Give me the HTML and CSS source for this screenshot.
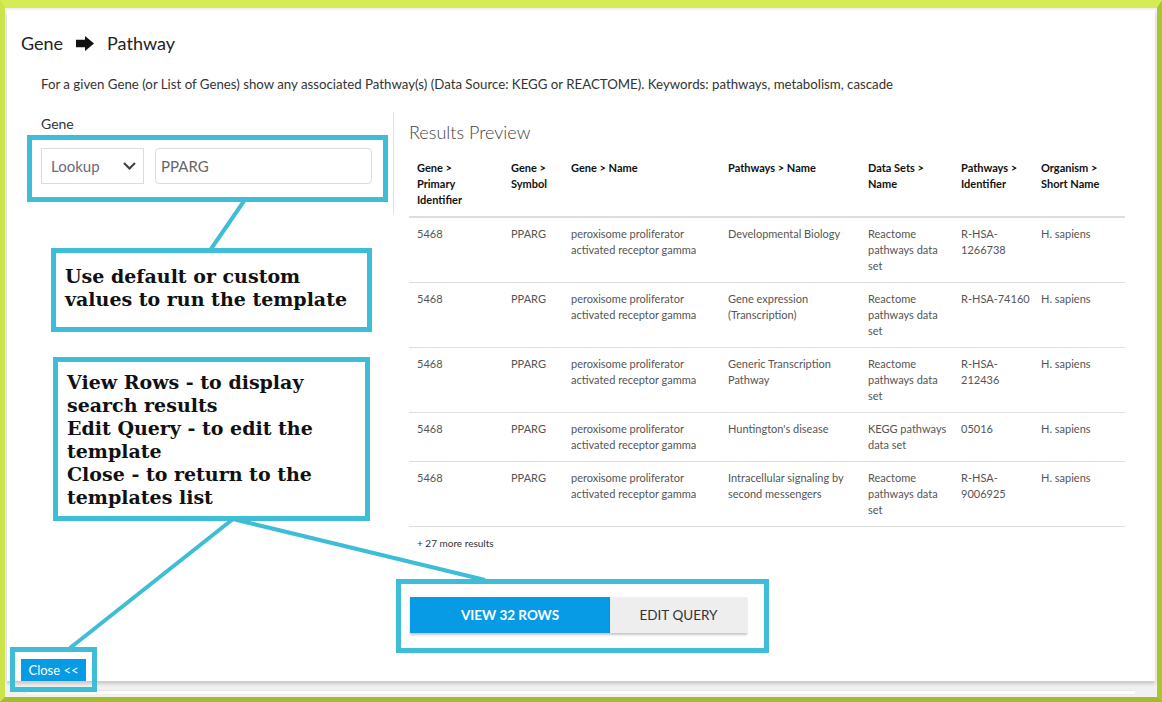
FILE: index.html
```html
<!DOCTYPE html>
<html lang="en">
<head>
<meta charset="utf-8">
<title>Gene → Pathway</title>
<link rel="stylesheet" href="styles.css">
</head>
<body>
<div class="frame">
  <div class="card">
    <h1 class="title">
      <span>Gene</span>
      <svg class="arrow" width="18" height="15" viewBox="0 0 18 15"><path d="M0 3.8H9V0L18 7.5L9 15V11.2H0Z" fill="#111"/></svg>
      <span>Pathway</span>
    </h1>
    <p class="desc">For a given Gene (or List of Genes) show any associated Pathway(s) (Data Source: KEGG or REACTOME). Keywords: pathways, metabolism, cascade</p>
    <div class="body">
      <div class="left">
        <div class="label">Gene</div>
        <div class="constraint">
          <div class="select">
            <span>Lookup</span>
            <svg width="13" height="8" viewBox="0 0 13 8"><path d="M1 1L6.5 6.5L12 1" fill="none" stroke="#444" stroke-width="2.2"/></svg>
          </div>
          <div class="input">PPARG</div>
        </div>
      </div>
      <div class="right">
        <h2 class="results-title">Results Preview</h2>
        <table class="results">
          <colgroup>
            <col style="width:94px"><col style="width:60px"><col style="width:157px"><col style="width:140px"><col style="width:93px"><col style="width:80px"><col style="width:92px">
          </colgroup>
          <thead>
            <tr>
              <th>Gene &gt;<br>Primary<br>Identifier</th>
              <th>Gene &gt;<br>Symbol</th>
              <th>Gene &gt; Name</th>
              <th>Pathways &gt; Name</th>
              <th>Data Sets &gt;<br>Name</th>
              <th>Pathways &gt;<br>Identifier</th>
              <th>Organism &gt;<br>Short Name</th>
            </tr>
          </thead>
          <tbody>
            <tr>
              <td>5468</td><td>PPARG</td><td>peroxisome proliferator<br>activated receptor gamma</td><td>Developmental Biology</td><td>Reactome<br>pathways data<br>set</td><td>R-HSA-<br>1266738</td><td>H. sapiens</td>
            </tr>
            <tr>
              <td>5468</td><td>PPARG</td><td>peroxisome proliferator<br>activated receptor gamma</td><td>Gene expression<br>(Transcription)</td><td>Reactome<br>pathways data<br>set</td><td>R-HSA-74160</td><td>H. sapiens</td>
            </tr>
            <tr>
              <td>5468</td><td>PPARG</td><td>peroxisome proliferator<br>activated receptor gamma</td><td>Generic Transcription<br>Pathway</td><td>Reactome<br>pathways data<br>set</td><td>R-HSA-<br>212436</td><td>H. sapiens</td>
            </tr>
            <tr>
              <td>5468</td><td>PPARG</td><td>peroxisome proliferator<br>activated receptor gamma</td><td>Huntington's disease</td><td>KEGG pathways<br>data set</td><td>05016</td><td>H. sapiens</td>
            </tr>
            <tr>
              <td>5468</td><td>PPARG</td><td>peroxisome proliferator<br>activated receptor gamma</td><td>Intracellular signaling by<br>second messengers</td><td>Reactome<br>pathways data<br>set</td><td>R-HSA-<br>9006925</td><td>H. sapiens</td>
            </tr>
          </tbody>
        </table>
        <div class="more">+ 27 more results</div>
        <div class="actions">
          <button class="btn btn-primary">VIEW 32 ROWS</button>
          <button class="btn btn-secondary">EDIT QUERY</button>
        </div>
      </div>
    </div>
    <button class="close">Close &lt;&lt;</button>
  </div>
  <div class="footer-bar"></div>
</div>

<svg class="callout-lines" width="1162" height="702" viewBox="0 0 1162 702">
  <g stroke="#3dbdd6" stroke-width="4" fill="none">
    <line x1="244" y1="201" x2="211" y2="249"/>
    <line x1="233" y1="519" x2="70" y2="648"/>
    <line x1="233" y1="519" x2="485" y2="580"/>
  </g>
</svg>
<div class="outline outline-inputs"></div>
<div class="outline outline-buttons"></div>
<div class="outline outline-close"></div>
<div class="note note-values">Use default or custom<br>values to run the template</div>
<div class="note note-buttons">View Rows - to display<br>search results<br>Edit Query - to edit the<br>template<br>Close - to return to the<br>templates list</div>
</body>
</html>
```
FILE: styles.css
```css
* { box-sizing: border-box; }
html, body { margin: 0; padding: 0; }
body {
  position: relative;
  width: 1162px;
  height: 702px;
  overflow: hidden;
  font-family: Lato, "Open Sans", sans-serif;
  background: #a4bb2a;
}
.frame {
  width: 1162px;
  height: 702px;
  border-style: solid;
  border-width: 8px 5px 5px 5px;
  border-color: #d6ec55 #a9c530 #a4bb2a #cde34b;
  background: #f1f1f1;
  padding: 2px 2px 0 2px;
}
.card {
  display: flex;
  flex-direction: column;
  height: 671px;
  background: #fff;
  padding: 21px 30px 0 14px;
  box-shadow: 0 3px 3px rgba(0, 0, 0, 0.16);
}
.title {
  display: flex;
  align-items: center;
  gap: 13px;
  margin: 0;
  font-size: 18px;
  line-height: 24px;
  font-weight: 400;
  color: #222;
}
.arrow { margin-top: 1px; }
.desc {
  margin: 20px 0 0 20px;
  font-size: 13.25px;
  line-height: 18px;
  color: #333;
}
.body {
  display: flex;
  align-items: flex-start;
  margin-top: 19px;
}
.left {
  width: 353px;
  margin-left: 20px;
  padding: 2px 0 30px 0;
  border-right: 1px solid #e3e3e3;
}
.label {
  font-size: 14px;
  line-height: 20px;
  color: #333;
}
.constraint {
  display: flex;
  gap: 11px;
  margin-top: 14px;
}
.select {
  display: flex;
  align-items: center;
  justify-content: space-between;
  width: 103px;
  height: 36px;
  border: 1px solid #dcdcdc;
  padding: 0 7px 0 9px;
  font-size: 15px;
  color: #6c6a7e;
}
.input {
  display: flex;
  align-items: center;
  width: 217px;
  height: 36px;
  border: 1px solid #dcdcdc;
  border-radius: 4px;
  padding: 0 5px;
  font-size: 15px;
  color: #666;
}
.right {
  flex: 1;
  padding-left: 15px;
}
.results-title {
  margin: 8px 0 0;
  font-size: 18px;
  line-height: 24px;
  font-weight: 300;
  color: #444;
}
.results {
  margin-top: 8px;
  width: 716px;
  table-layout: fixed;
  border-collapse: collapse;
}
.results th, .results td {
  text-align: left;
  vertical-align: top;
  padding: 8px;
  font-size: 11px;
  line-height: 16px;
  white-space: nowrap;
}
.results th {
  font-weight: 700;
  color: #111;
  border-bottom: 2px solid #dddddd;
}
.results td {
  color: #555;
  border-bottom: 1px solid #dddddd;
}
.more {
  margin-top: 9px;
  padding-left: 8px;
  font-size: 10px;
  line-height: 14px;
  color: #333;
}
.actions {
  display: flex;
  margin: 47px 0 0 1px;
}
.btn {
  height: 36px;
  border: none;
  padding: 0;
  font-family: Lato, "Open Sans", sans-serif;
  font-size: 13.5px;
  box-shadow: 0 2px 2px rgba(0, 0, 0, 0.22);
}
.btn-primary {
  width: 200px;
  background: #089be5;
  color: #fff;
  font-weight: 700;
}
.btn-secondary {
  width: 137px;
  background: #eeeeee;
  color: #333;
  font-weight: 400;
}
.close {
  margin-top: auto;
  align-self: flex-start;
  width: 65px;
  height: 22px;
  border: none;
  padding: 0;
  background: #089be5;
  color: #fff;
  font-family: Lato, "Open Sans", sans-serif;
  font-size: 13px;
}
.footer-bar {
  margin: 9px 20px 0 20px;
  height: 4px;
  background: #fff;
  border-top: 1px solid #e6e6e6;
}
.callout-lines {
  position: absolute;
  left: 0;
  top: 0;
  pointer-events: none;
}
.outline, .note {
  position: absolute;
  border: 5px solid #3dbdd6;
}
.outline-inputs { left: 27px; top: 135px; width: 361px; height: 67px; }
.outline-buttons { left: 396px; top: 579px; width: 373px; height: 74px; }
.outline-close { left: 10px; top: 647px; width: 87px; height: 45px; }
.note {
  background: #fff;
  font-family: "DejaVu Serif", "Liberation Serif", serif;
  font-weight: 700;
  font-size: 19px;
  line-height: 23px;
  color: #111;
  padding-left: 9px;
}
.note-values { left: 51px; top: 248px; width: 321px; height: 84px; padding-top: 12px; }
.note-buttons { left: 53px; top: 357px; width: 317px; height: 164px; padding-top: 9px; }
```
